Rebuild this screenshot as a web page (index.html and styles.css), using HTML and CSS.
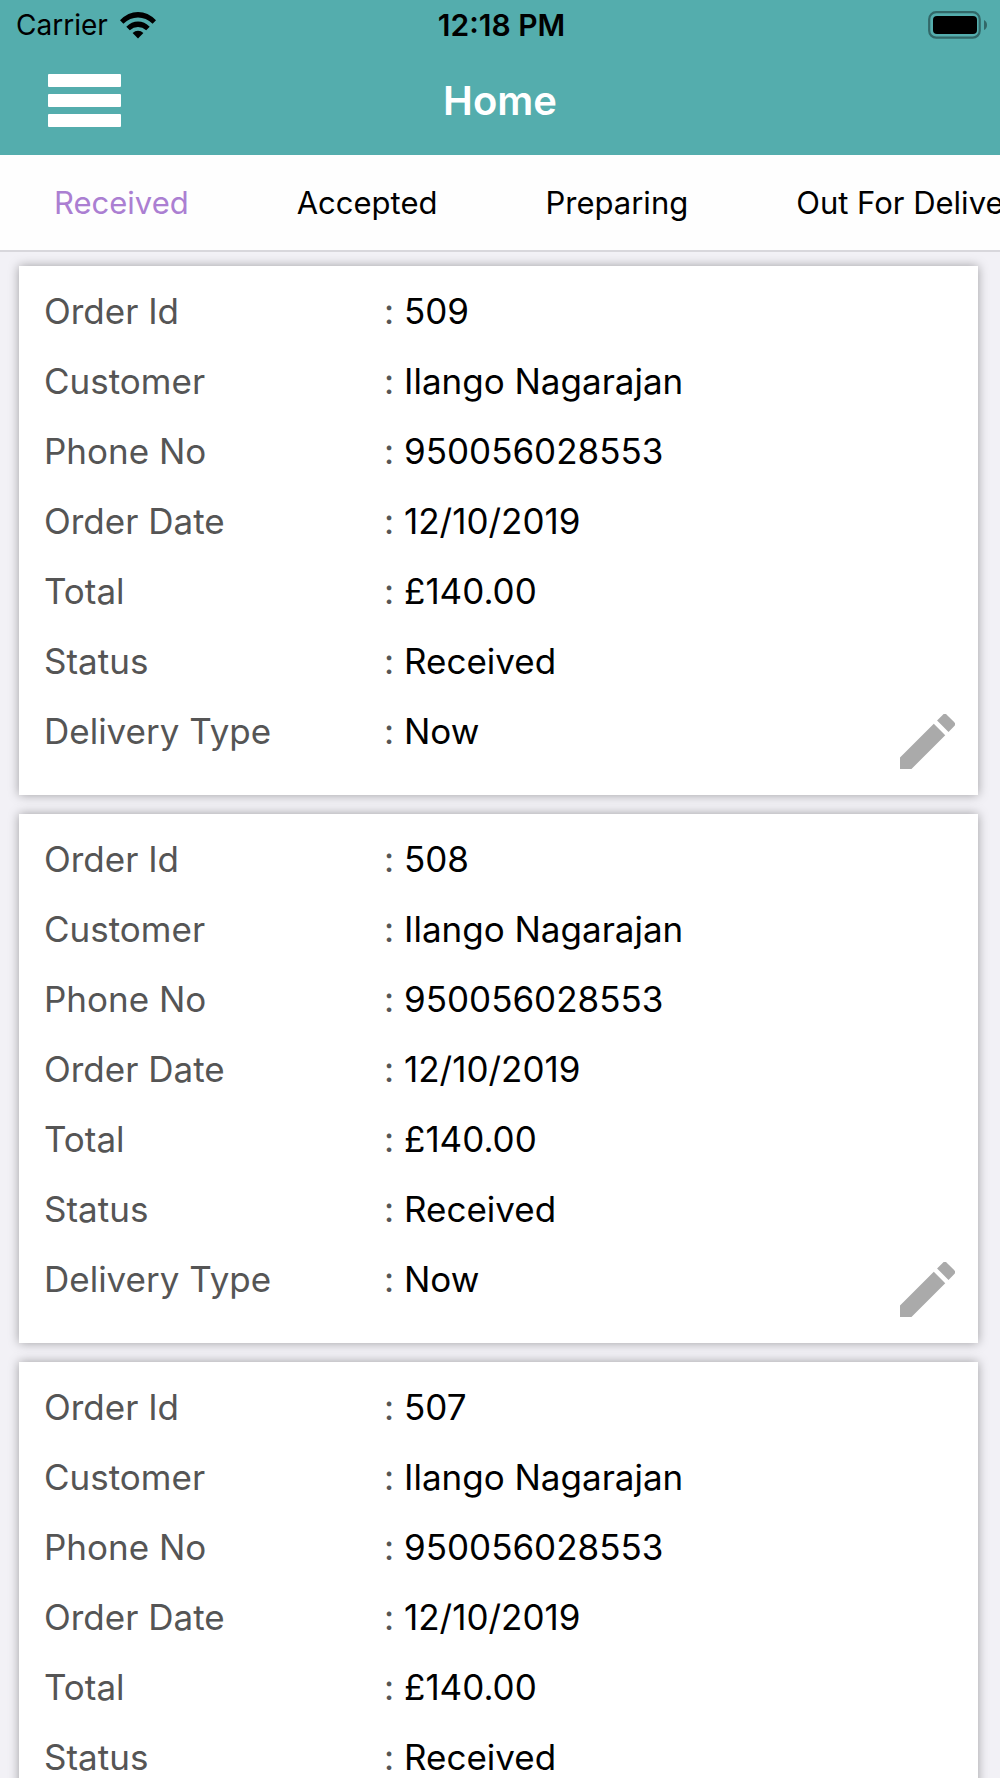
FILE: index.html
```
<!DOCTYPE html>
<html lang="en">
<head>
    <meta charset="UTF-8">
    <meta name="viewport" content="width=device-width, initial-scale=1.0">
    <title>Home</title>
    <link rel="stylesheet" href="styles.css">
</head>
<body>
    <header>
        <div class="statusbar">
            <div class="carrier">
                <span>Carrier</span>
                <svg class="wifi" viewBox="0 0 36 27">
                    <path d="M0 8.300Q8 0 18 0T36 8.300L32.600 11.700Q26 5.400 18 5.400T3.400 11.700Z"/>
                    <path d="M6.300 14.700Q11.500 9.500 18 9.500T29.700 14.700L26.200 18.200Q22.500 15 18 15T9.800 18.200Z"/>
                    <path d="M12.600 21Q15 18.800 18 18.800T23.400 21L18 26.600Z"/>
                </svg>
            </div>
            <span class="time">12:18 PM</span>
            <svg class="battery" viewBox="0 0 59 28">
                <rect x="1.200" y="1.200" width="50.500" height="25.500" rx="7" fill="none" stroke="#326868" stroke-width="2.200"/>
                <rect x="5" y="5" width="44" height="18" rx="4"/>
                <path d="M56 9Q59 10.500 59 14T56 19Z" fill="#326868"/>
            </svg>
        </div>
        <div class="navbar">
            <button class="menu" aria-label="Menu">
                <span></span>
                <span></span>
                <span></span>
            </button>
            <h1>Home</h1>
        </div>
    </header>

    <nav class="tabs">
        <button class="active">Received</button>
        <button>Accepted</button>
        <button>Preparing</button>
        <button>Out For Delivery</button>
    </nav>

    <main>
        <div class="card">
            <dl>
                <div><dt>Order Id</dt><dd><span>:</span>509</dd></div>
                <div><dt>Customer</dt><dd><span>:</span>Ilango Nagarajan</dd></div>
                <div><dt>Phone No</dt><dd><span>:</span>950056028553</dd></div>
                <div><dt>Order Date</dt><dd><span>:</span>12/10/2019</dd></div>
                <div><dt>Total</dt><dd><span>:</span>£140.00</dd></div>
                <div><dt>Status</dt><dd><span>:</span>Received</dd></div>
                <div><dt>Delivery Type</dt><dd><span>:</span>Now</dd></div>
            </dl>
            <button class="edit" aria-label="Edit order 509">
                <svg viewBox="3 3 18 18"><path d="M3 17.250V21h3.750L17.810 9.940l-3.750-3.750L3 17.250zM20.710 7.040a1 1 0 0 0 0-1.410l-2.340-2.340a1 1 0 0 0-1.410 0l-1.830 1.830 3.750 3.750 1.830-1.830z"/></svg>
            </button>
        </div>

        <div class="card">
            <dl>
                <div><dt>Order Id</dt><dd><span>:</span>508</dd></div>
                <div><dt>Customer</dt><dd><span>:</span>Ilango Nagarajan</dd></div>
                <div><dt>Phone No</dt><dd><span>:</span>950056028553</dd></div>
                <div><dt>Order Date</dt><dd><span>:</span>12/10/2019</dd></div>
                <div><dt>Total</dt><dd><span>:</span>£140.00</dd></div>
                <div><dt>Status</dt><dd><span>:</span>Received</dd></div>
                <div><dt>Delivery Type</dt><dd><span>:</span>Now</dd></div>
            </dl>
            <button class="edit" aria-label="Edit order 508">
                <svg viewBox="3 3 18 18"><path d="M3 17.250V21h3.750L17.810 9.940l-3.750-3.750L3 17.250zM20.710 7.040a1 1 0 0 0 0-1.410l-2.340-2.340a1 1 0 0 0-1.410 0l-1.830 1.830 3.750 3.750 1.830-1.830z"/></svg>
            </button>
        </div>

        <div class="card">
            <dl>
                <div><dt>Order Id</dt><dd><span>:</span>507</dd></div>
                <div><dt>Customer</dt><dd><span>:</span>Ilango Nagarajan</dd></div>
                <div><dt>Phone No</dt><dd><span>:</span>950056028553</dd></div>
                <div><dt>Order Date</dt><dd><span>:</span>12/10/2019</dd></div>
                <div><dt>Total</dt><dd><span>:</span>£140.00</dd></div>
                <div><dt>Status</dt><dd><span>:</span>Received</dd></div>
                <div><dt>Delivery Type</dt><dd><span>:</span>Now</dd></div>
            </dl>
            <button class="edit" aria-label="Edit order 507">
                <svg viewBox="3 3 18 18"><path d="M3 17.250V21h3.750L17.810 9.940l-3.750-3.750L3 17.250zM20.710 7.040a1 1 0 0 0 0-1.410l-2.340-2.340a1 1 0 0 0-1.410 0l-1.830 1.830 3.750 3.750 1.830-1.830z"/></svg>
            </button>
        </div>
    </main>
</body>
</html>
```
FILE: styles.css
```
* {
    box-sizing: border-box;
}
body {
    font-family: Inter, Roboto, Arial, sans-serif;
    margin: 0px;
    height: 100vh;
    display: flex;
    flex-direction: column;
    background-color: #f2f1f6;
    color: black;
}
button {
    font-family: inherit;
    background: none;
    border: none;
    padding: 0px;
    color: inherit;
    cursor: pointer;
}
svg {
    display: block;
}

/* header */
header {
    background-color: #54adad;
    flex-shrink: 0;
}
.statusbar {
    display: grid;
    grid-template-columns: 1fr auto 1fr;
    align-items: center;
    height: 50px;
    padding: 0px 13px 0px 16px;
    font-size: 28px;
}
.carrier {
    display: flex;
    align-items: center;
    gap: 12px;
}
.wifi {
    width: 36px;
    height: 27px;
}
.time {
    font-size: 30px;
    font-weight: 600;
}
.battery {
    width: 59px;
    height: 28px;
    justify-self: end;
}
.navbar {
    display: grid;
    grid-template-columns: 1fr auto 1fr;
    align-items: center;
    height: 105px;
    padding: 0px 48px 4px;
}
.menu {
    display: flex;
    flex-direction: column;
    gap: 7px;
    width: 73px;
}
.menu span {
    height: 13px;
    width: 100%;
    border-radius: 1px;
    background-color: white;
}
h1 {
    margin: 0px;
    font-size: 40px;
    font-weight: 600;
    color: white;
}

/* tabs */
.tabs {
    display: flex;
    flex-shrink: 0;
    height: 97px;
    overflow: hidden;
    background-color: #fefefe;
    border-bottom: 2px solid #d8d7dc;
}
.tabs button {
    flex-shrink: 0;
    padding: 0px 54px;
    font-size: 31px;
}
.tabs .active {
    color: #ab7fd2;
}

/* order list */
main {
    flex: 1;
    overflow-y: auto;
    scrollbar-width: none;
    padding: 14px 22px 14px 19px;
}
.card {
    display: flex;
    align-items: flex-end;
    gap: 6px;
    margin-bottom: 19px;
    padding: 10px 23px 26px 25px;
    background-color: white;
    box-shadow: 0px 0px 10px rgba(0, 0, 0, 0.35);
}
dl {
    flex: 1;
    margin: 0px 0px 3px;
    font-size: 35px;
}
dl div {
    display: flex;
    align-items: center;
    height: 70px;
}
dt {
    width: 40%;
    color: #555555;
}
dd {
    display: flex;
    margin: 0px;
}
dd span {
    width: 20px;
    color: #555555;
}
.edit svg {
    width: 55px;
    height: 55px;
    fill: #aaaaaa;
}
```
